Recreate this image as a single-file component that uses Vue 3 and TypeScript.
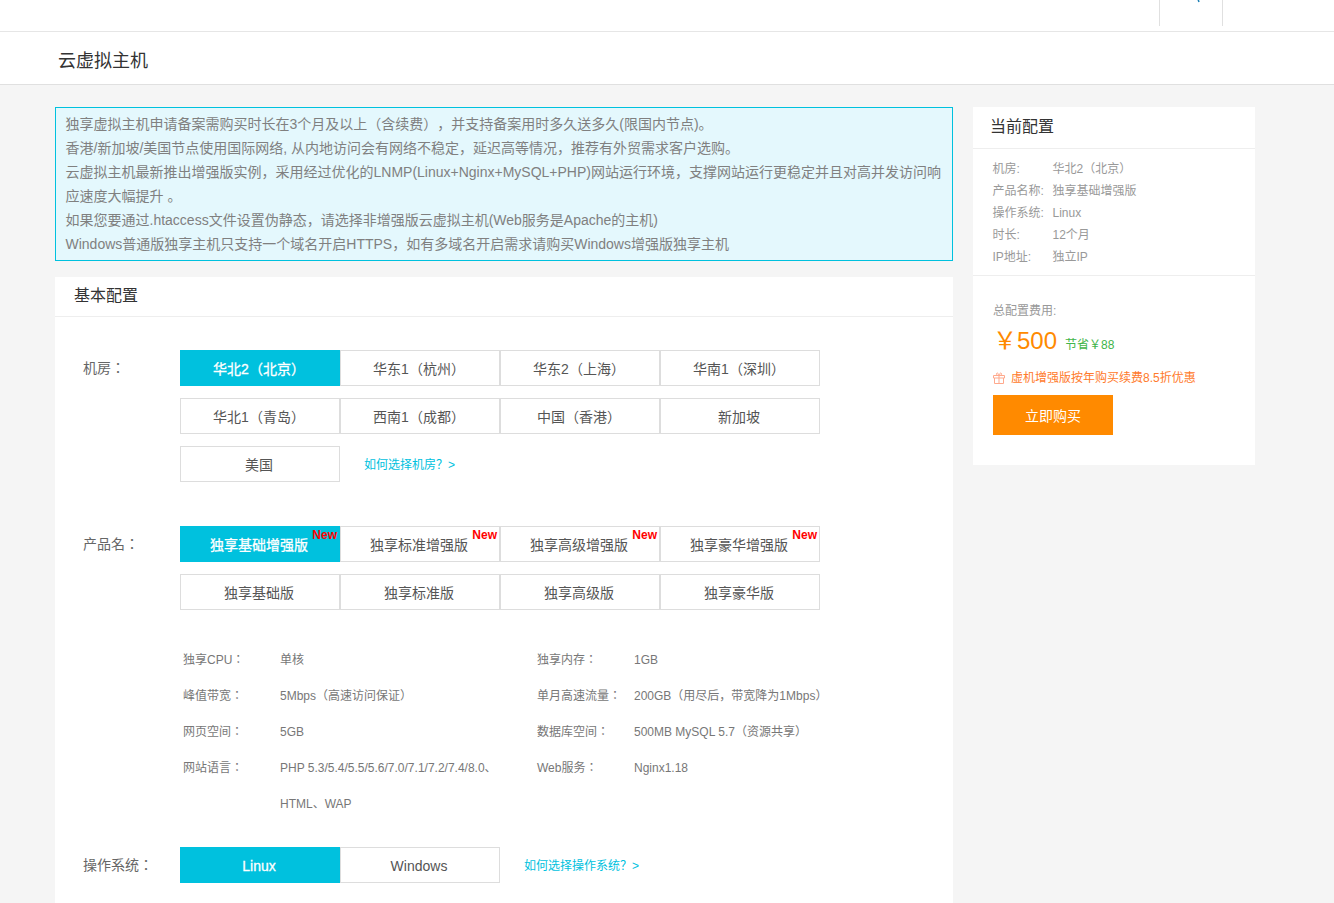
<script setup lang="ts">
interface Spec {
  label: string
  value: string
}

const notices = [
  '独享虚拟主机申请备案需购买时长在3个月及以上（含续费），并支持备案用时多久送多久(限国内节点)。',
  '香港/新加坡/美国节点使用国际网络, 从内地访问会有网络不稳定，延迟高等情况，推荐有外贸需求客户选购。',
  '云虚拟主机最新推出增强版实例，采用经过优化的LNMP(Linux+Nginx+MySQL+PHP)网站运行环境，支撑网站运行更稳定并且对高并发访问响应速度大幅提升 。',
  '如果您要通过.htaccess文件设置伪静态，请选择非增强版云虚拟主机(Web服务是Apache的主机)',
  'Windows普通版独享主机只支持一个域名开启HTTPS，如有多域名开启需求请购买Windows增强版独享主机',
]

const rooms = ['华北2（北京）', '华东1（杭州）', '华东2（上海）', '华南1（深圳）', '华北1（青岛）', '西南1（成都）', '中国（香港）', '新加坡', '美国']
const products = ['独享基础增强版', '独享标准增强版', '独享高级增强版', '独享豪华增强版', '独享基础版', '独享标准版', '独享高级版', '独享豪华版']

const specs: Spec[] = [
  { label: '独享CPU：', value: '单核' },
  { label: '独享内存：', value: '1GB' },
  { label: '峰值带宽：', value: '5Mbps（高速访问保证）' },
  { label: '单月高速流量：', value: '200GB（用尽后，带宽降为1Mbps）' },
  { label: '网页空间：', value: '5GB' },
  { label: '数据库空间：', value: '500MB MySQL 5.7（资源共享）' },
  { label: '网站语言：', value: 'PHP 5.3/5.4/5.5/5.6/7.0/7.1/7.2/7.4/8.0、HTML、WAP' },
  { label: 'Web服务：', value: 'Nginx1.18' },
]

const summary: Spec[] = [
  { label: '机房:', value: '华北2（北京）' },
  { label: '产品名称:', value: '独享基础增强版' },
  { label: '操作系统:', value: 'Linux' },
  { label: '时长:', value: '12个月' },
  { label: 'IP地址:', value: '独立IP' },
]
</script>

<template>
  <div class="page">
    <div class="topbar">
      <div class="top-search">
        <svg class="search-icon" width="14" height="14" viewBox="0 0 14 14">
          <circle cx="6" cy="-8" r="6" fill="none" stroke="#1b7fb5" stroke-width="1.5" />
          <path d="M10 -3.500L12 2" stroke="#1b7fb5" stroke-width="1.5" fill="none" />
        </svg>
      </div>
    </div>
    <div class="titlebar"><h1>云虚拟主机</h1></div>

    <div class="main">
      <div class="left">
        <div class="notice">
          <p v-for="n in notices" :key="n">{{ n }}</p>
        </div>

        <section class="card">
          <h2 class="card-title">基本配置</h2>
          <div class="card-body">
            <div class="row room-row">
              <div class="row-label">机房：</div>
              <div class="options">
                <button
                  v-for="(r, i) in rooms"
                  :key="r"
                  class="opt"
                  :class="{ active: i === 0 }"
                >{{ r }}</button>
                <a class="help">如何选择机房？&gt;</a>
              </div>
            </div>

            <div class="row product-row">
              <div class="row-label">产品名：</div>
              <div class="options">
                <button
                  v-for="(p, i) in products"
                  :key="p"
                  class="opt"
                  :class="{ active: i === 0 }"
                >
                  {{ p }}
                  <span v-if="i < 4" class="new-tag">New</span>
                </button>
              </div>
            </div>

            <div class="specs">
              <div v-for="s in specs" :key="s.label" class="spec">
                <span class="spec-label">{{ s.label }}</span>
                <span class="spec-value">{{ s.value }}</span>
              </div>
            </div>

            <div class="row os-row">
              <div class="row-label">操作系统：</div>
              <div class="options">
                <button class="opt active">Linux</button>
                <button class="opt">Windows</button>
                <a class="help">如何选择操作系统？&gt;</a>
              </div>
            </div>
          </div>
        </section>
      </div>

      <aside class="side">
        <h2 class="side-title">当前配置</h2>
        <div class="summary">
          <div v-for="s in summary" :key="s.label" class="sum-line">
            <span class="sum-label">{{ s.label }}</span>
            <span>{{ s.value }}</span>
          </div>
        </div>
        <div class="cost">
          <div class="cost-label">总配置费用:</div>
          <div class="price-line">
            <span class="price">￥500</span>
            <span class="saved">节省￥88</span>
          </div>
          <div class="promo">
            <svg width="12" height="12" viewBox="0 0 12 12" fill="none" stroke="#ffa98c" stroke-width="1">
              <path d="M.5 3.500h11v2.500H.5zM1.500 6v5.500h9V6M6 3.500v8M6 3.500C4 3.500 3 2.500 3.500 1.500S5.500 1 6 3.500zM6 3.500c2 0 3-1 2.500-2S6.500 1 6 3.500z" />
            </svg>
            <span>虚机增强版按年购买续费8.5折优惠</span>
          </div>
          <button class="buy">立即购买</button>
        </div>
      </aside>
    </div>
  </div>
</template>

<style scoped>
.page {
  height: 903px;
  overflow: hidden;
  background: #f5f5f5;
  font-family: "Liberation Sans", "Noto Sans CJK SC", sans-serif;
  color: #555;
  text-spacing-trim: space-all;
}

.topbar {
  height: 31px;
  background: #fff;
  border-bottom: 1px solid #e6e6e6;
  display: flex;
  justify-content: flex-end;
}

.top-search {
  width: 62px;
  height: 26px;
  margin-right: 111px;
  border-left: 1px solid #e0e0e0;
  border-right: 1px solid #e0e0e0;
  overflow: hidden;
}

.search-icon {
  display: block;
  margin-left: 27px;
}

.titlebar {
  height: 52px;
  background: #fff;
  border-bottom: 1px solid #e0e0e0;
  padding-left: 58px;
}

.titlebar h1 {
  margin: 0;
  font-size: 18px;
  font-weight: 400;
  line-height: 59px;
  color: #333;
}

.main {
  display: flex;
  align-items: flex-start;
  gap: 20px;
  padding: 22px 0 0 55px;
}

.left {
  width: 898px;
}

.notice {
  border: 1px solid #00c1de;
  background: #e4f8fd;
  padding: 4px 10px 4px 9.5px;
  font-size: 14px;
  line-height: 24px;
  color: #808080;
}

.notice p {
  margin: 0;
}

.card {
  margin-top: 16px;
  background: #fff;
}

.card-title,
.side-title {
  margin: 0;
  font-size: 16px;
  font-weight: 400;
  color: #333;
  border-bottom: 1px solid #eee;
}

.card-title {
  height: 39px;
  line-height: 37px;
  padding-left: 19px;
}

.card-body {
  padding: 33px 0 30px 125px;
}

.row {
  display: flex;
}

/* JP forms centre the full-width colon, as the original labels do */
.row-label,
.spec-label {
  font-family: "Liberation Sans", "Noto Sans CJK JP", sans-serif;
}

.row-label {
  width: 0;
  margin-left: -97px;
  margin-right: 97px;
  white-space: nowrap;
  font-size: 14px;
  line-height: 36px;
  color: #666;
}

.options {
  width: 640px;
  display: flex;
  flex-wrap: wrap;
  align-items: center;
  row-gap: 12px;
}

.opt {
  position: relative;
  width: 160px;
  height: 36px;
  box-sizing: border-box;
  border: 1px solid #ddd;
  background: #fff;
  padding: 0 2px 0 0;
  font-family: inherit;
  font-size: 14px;
  color: #555;
}

.opt.active {
  background: #00c1de;
  border-color: #00c1de;
  color: #fff;
  -webkit-text-stroke: 0.3px #fff;
}

.help {
  margin: -2px 0 0 24px;
  font-size: 12px;
  color: #00c1de;
}

.product-row {
  margin-top: 44px;
}

.new-tag {
  position: absolute;
  top: 0;
  right: 2px;
  font-size: 12px;
  line-height: 16px;
  font-weight: 700;
  color: #f00;
  -webkit-text-stroke: 0;
}

.specs {
  width: 708px;
  margin-top: 32px;
  display: grid;
  grid-template-columns: 354px 354px;
  font-size: 12px;
  line-height: 36px;
  color: #777;
}

.spec {
  display: flex;
  padding-left: 3px;
}

.spec-label {
  width: 97px;
  flex: none;
  white-space: nowrap;
}

.spec-value {
  width: 220px;
  flex: none;
  white-space: normal;
}

.spec:nth-child(even) .spec-value {
  white-space: nowrap;
}

.os-row {
  margin-top: 25px;
}

.os-row .opt {
  padding-top: 2px;
}

.side {
  width: 282px;
  height: 358px;
  background: #fff;
}

.side-title {
  height: 41px;
  line-height: 39px;
  padding-left: 17px;
}

.summary {
  height: 127px;
  padding: 9px 0 0 19.5px;
  box-sizing: border-box;
  border-bottom: 1px solid #eee;
  font-size: 12px;
  line-height: 22px;
  color: #999;
}

.sum-line {
  display: flex;
}

.sum-label {
  width: 60px;
  flex: none;
  white-space: nowrap;
}

.cost {
  padding: 25px 0 0 20px;
}

.cost-label {
  font-size: 12px;
  line-height: 20px;
  color: #999;
}

.price-line {
  display: flex;
  align-items: baseline;
  height: 40px;
  line-height: 40px;
}

.price {
  font-size: 24px;
  color: #ff8a00;
}

.saved {
  margin-left: 8px;
  font-size: 12px;
  color: #3fb54a;
}

.promo {
  margin-top: 7px;
  display: flex;
  align-items: center;
  gap: 6px;
  font-size: 12px;
  line-height: 20px;
  color: #ff7a2b;
}

.buy {
  display: block;
  width: 120px;
  height: 40px;
  margin-top: 7px;
  border: 0;
  padding: 0;
  background: #ff8a00;
  color: #fff;
  font-family: inherit;
  font-size: 14px;
}
</style>
